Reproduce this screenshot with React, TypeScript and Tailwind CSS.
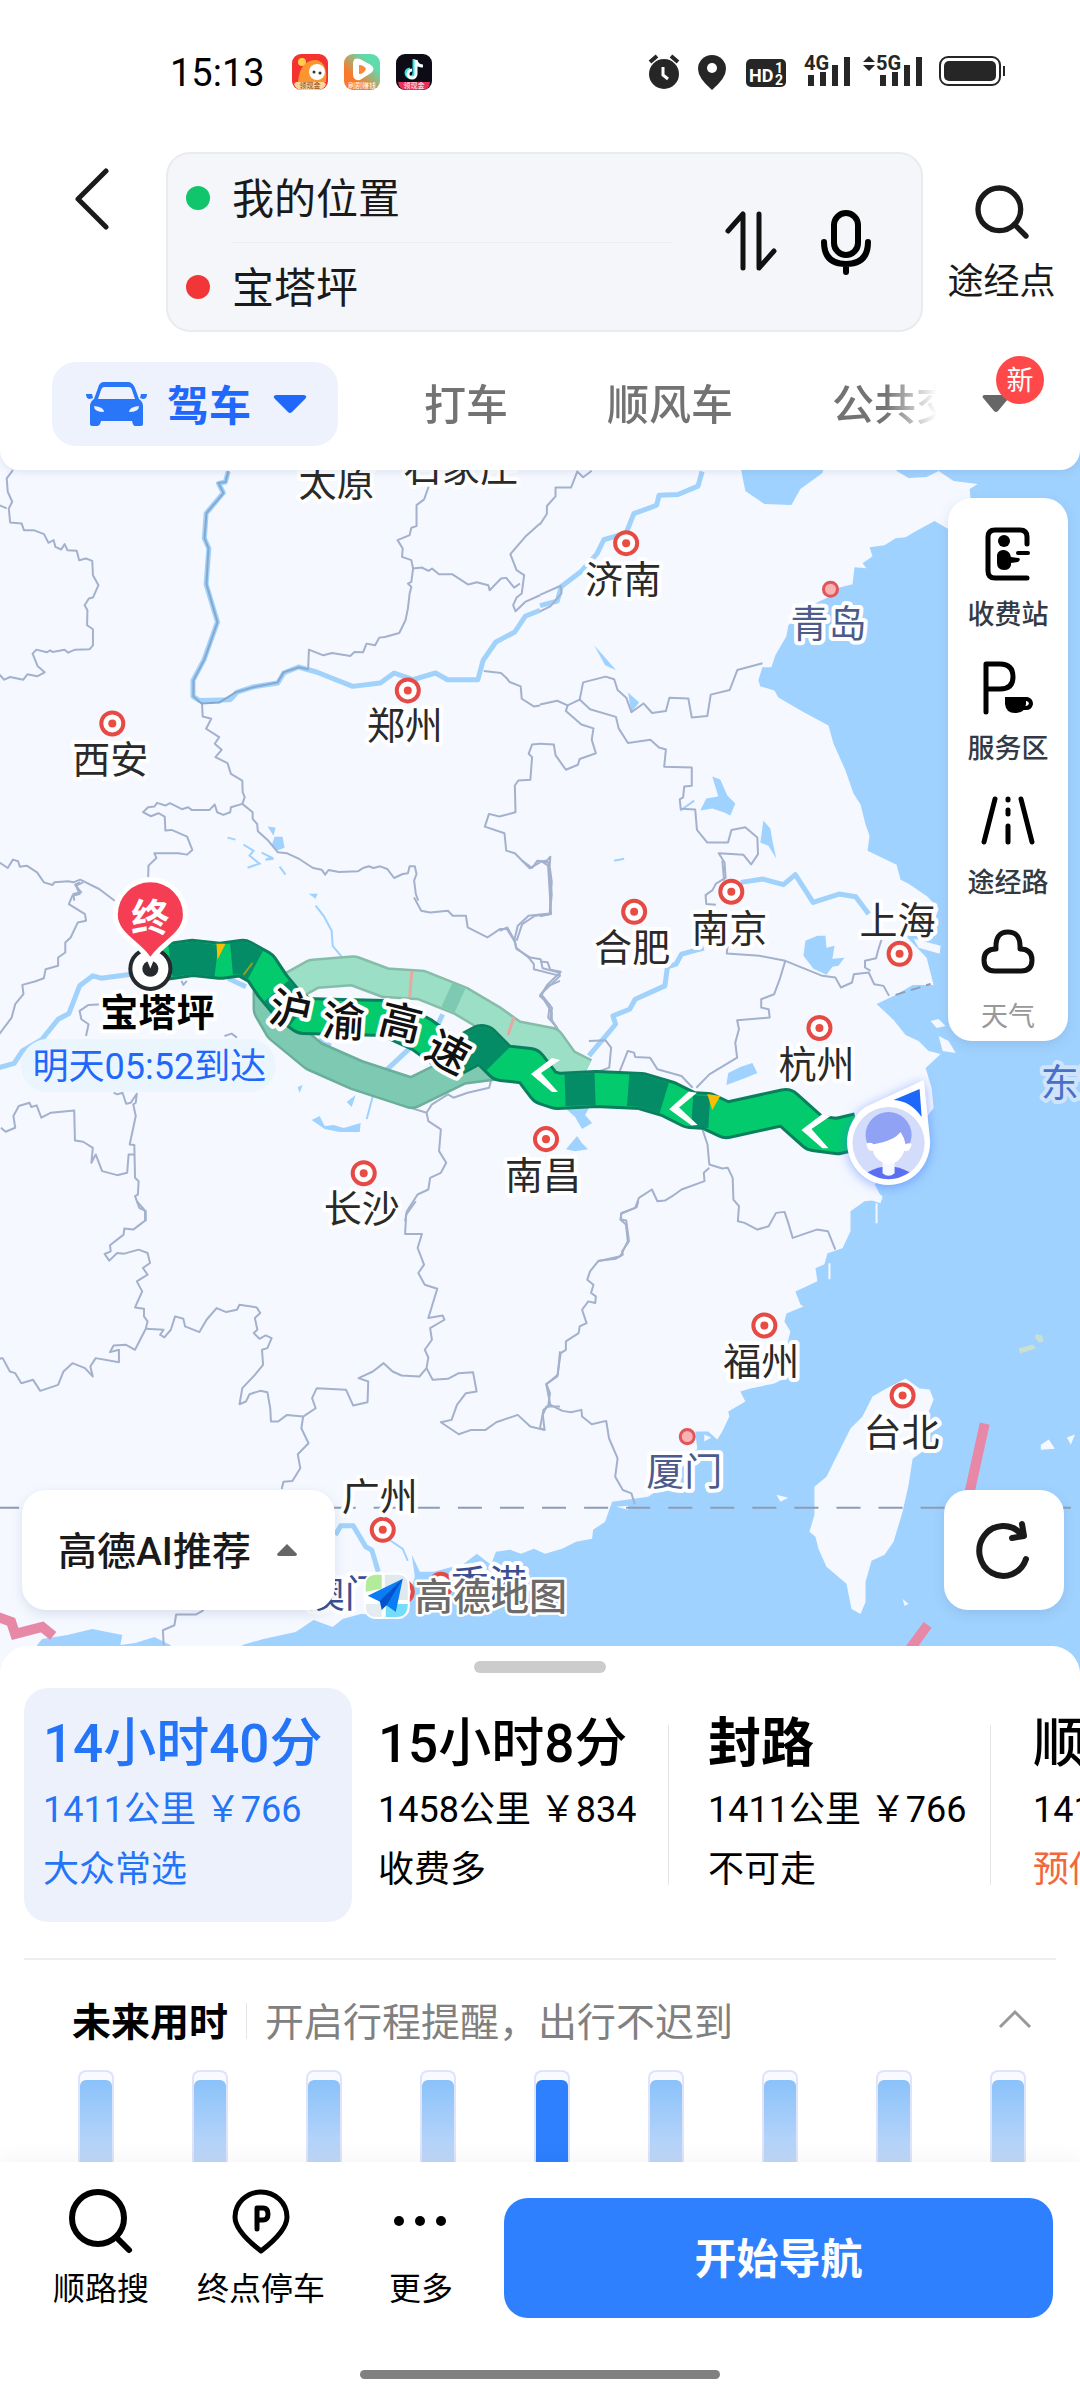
import { Search } from 'lucide-react';

const cities = [
  { name: '太原', x: 337, y: 481 },
  { name: '石家庄', x: 461, y: 466 },
  { name: '济南', x: 623, y: 578, dot: [626, 543] },
  { name: '郑州', x: 405, y: 724, dot: [408, 690] },
  { name: '西安', x: 111, y: 757, dot: [113, 723] },
  { name: '合肥', x: 632, y: 945, dot: [634, 911] },
  { name: '南京', x: 729, y: 926, dot: [731, 891] },
  { name: '上海', x: 897, y: 918, dot: [899, 953] },
  { name: '杭州', x: 816, y: 1062, dot: [819, 1027] },
  { name: '南昌', x: 543, y: 1173, dot: [546, 1138] },
  { name: '长沙', x: 362, y: 1206, dot: [364, 1172] },
  { name: '福州', x: 761, y: 1359, dot: [764, 1324] },
  { name: '台北', x: 901, y: 1429, dot: [902, 1394] },
  { name: '广州', x: 380, y: 1493, dot: [383, 1528] },
];

const coastCities = [
  { name: '青岛', x: 828, y: 622, dot: [830, 589] },
  { name: '厦门', x: 684, y: 1468, dot: [687, 1435] },
];

// Province borders and rivers, each tile in its own units
const tiles = [
  {
    transform: 'translate(0 460) scale(.3444 .3333)',
    borders: [
      '40,30 22,55 25,95 38,125 28,145 32,187 65,190 72,210 100,210 130,222 143,248 158,240 163,260 180,268 190,252 198,270 225,272 232,300 252,295 270,302 272,345 288,375 272,412 260,415 248,435 256,450 255,495 272,507 272,555 262,567 220,568 200,577 190,568 155,575 148,570 138,576 108,568 97,580 112,618 132,636 110,648 82,642 70,658 32,650 15,658 0,642',
      '0,135 22,145',
      '1245,80 1232,118 1210,135 1210,198 1195,203 1190,225 1155,240 1170,265 1168,290 1195,300 1200,325 1195,365 1185,370 1195,380 1190,400 1185,445 1178,480 1160,518 1118,530 1102,532 1090,555 1065,550 1055,576 1030,575 1018,587 965,578 940,585 898,568 896,625',
      '1200,325 1225,322 1245,332 1255,325 1275,342 1313,342 1360,373 1385,366 1418,375 1422,390 1455,355 1470,353 1493,382 1510,370',
      '1568,190 1525,230 1482,282 1500,330 1522,345 1515,400 1500,412 1490,435 1497,453 1525,425 1568,405',
      '588,725 590,768 615,775 600,805 638,830 625,850 645,868 627,890 662,908 672,940 705,960 706,995 712,1010 705,1030 735,1055 735,1075 748,1090 750,1112 780,1140 808,1175 835,1178 870,1195 910,1222 935,1227 945,1242 955,1228 985,1234 1040,1232 1055,1222 1072,1217 1085,1222 1105,1217 1125,1225 1145,1252 1170,1240 1185,1238 1190,1217 1205,1217 1210,1240 1203,1260 1208,1300 1215,1320',
      '705,1030 672,1040 670,1055 650,1063 632,1055 625,1032 610,1048 558,1048 548,1040 530,1046 495,1028 482,1035 458,1027 450,1038 432,1040 417,1055 440,1067 462,1058 480,1068 482,1110 500,1108 545,1128 560,1168 545,1182 520,1178 450,1178 456,1192 433,1215 432,1250',
      '0,1205 25,1222 40,1197 55,1202 60,1218 80,1215 110,1235 130,1265 155,1273 160,1265 200,1262 215,1265 235,1257 290,1285 335,1320',
      '235,1265 220,1272 238,1295 215,1300 218,1320',
      '1405,632 1455,638 1470,652 1480,665 1512,678 1515,715 1550,738 1568,735',
      '1568,850 1545,852 1535,880 1545,890 1540,958 1505,960 1495,975 1497,1055 1450,1068 1420,1060 1408,1098 1465,1118 1470,1170 1495,1178 1538,1223 1568,1205',
    ],
    rivers: [
      '664,34 656,66 636,70 650,98 600,160 595,235 608,265 600,372 633,485 594,598 562,660 562,708 580,720 670,718 690,695 735,680 808,668 825,638 868,620 920,635 1025,678 1105,668 1145,638 1200,658 1265,638 1300,658 1388,658 1403,600 1440,545 1495,515 1525,468 1568,450',
    ],
  },
  {
    transform: 'translate(540 460) scale(.3444 .3827)',
    borders: [
      '150,28 125,45 108,30 90,72 45,72 45,95 20,120 20,140 0,168',
      '0,352 60,328 62,348 30,382 0,395',
      '0,638 50,628 80,640 115,625 145,650 220,670 228,700 255,738 320,730 345,750 365,755 360,800 440,802 440,850 418,852 415,880 405,885 408,910 450,912 455,965 485,998 545,998 555,965 595,958 630,985 632,1028 612,1055 590,1030 518,1026 535,1050 538,1090 510,1105 500,1122 480,1135 482,1158 510,1160',
      '115,625 125,580 190,565 215,572 225,600 250,620 265,658 300,635 325,660 365,655 375,620 430,622 440,672 485,668 495,612 550,600 572,548 645,530',
      '80,640 75,655 120,690 155,700 150,730 162,765 115,780 110,795 75,808 45,770 40,742 0,740',
      '0,1048 20,1045 30,1035 28,1060 34,1100 28,1185 0,1190',
      '0,1308 22,1310 30,1330 60,1335 20,1370 5,1395 35,1430 30,1455 55,1490',
    ],
    rivers: [
      '470,30 458,68 400,90 345,92 338,118 272,140 250,190 215,200 185,208 165,245 120,290 62,330 50,368 0,380',
    ],
  },
  {
    transform: 'translate(0 860) scale(.3571 .3333)',
    borders: [
      '235,65 215,75 225,100 205,105 195,130 240,160 243,180 220,185 200,230 185,245 185,275 165,290 165,315 130,325 125,352 100,362 65,372 68,400 45,430 35,470 0,520',
      '290,430 250,432 225,450 230,475 250,490 243,525',
      '320,695 330,700 345,695 355,728 368,725 385,698 382,725 375,730 382,765 365,850 378,852 380,950 390,960 388,1000 380,1005 392,1040 410,1050 410,1080',
      '5,800 18,812 45,800 40,765 55,735 85,725 90,738 105,733 118,770 145,755 210,748 212,838 235,842 262,860 258,905 270,880 288,930 330,942 358,935 362,880 380,880',
      '1150,740 1195,755 1200,780 1235,805 1230,870 1250,905 1235,935 1205,950 1200,985 1170,1000 1140,1050 1135,1080',
      '1195,755 1210,730 1255,700 1270,710 1310,695 1370,680 1375,660',
      '1440,235 1445,260 1480,290 1495,310 1495,325 1568,345',
      '1160,110 1180,150 1205,155 1255,150 1268,165 1305,165 1310,200 1365,230 1400,205 1420,205 1440,240 1450,195 1480,165 1540,158 1545,100 1535,5 1505,0 1490,22 1462,0',
      '1568,360 1530,378 1512,405 1540,432 1535,470 1560,500',
      '630,525 650,518 665,530',
      '510,360 515,372 525,360',
    ],
    rivers: [
      '0,620 42,607 65,570 120,535 165,475 195,458 225,375 262,345 285,352 370,340',
      '640,352 690,378',
      '1240,460 1225,495 1150,560 1075,635',
    ],
  },
  {
    transform: 'translate(500 860) scale(.37 .3333)',
    borders: [
      '0,210 20,200 40,240 45,265 82,290 110,295 115,322 160,335 162,345 110,400 140,455 140,480 165,520 175,560',
      '110,0 130,15 138,160 95,165 60,190 45,240',
      '600,0 605,60',
      '615,250 612,278 700,285 770,300 870,345 905,350 920,380 950,365 955,340 995,335 1010,370 1035,375 1050,405',
      '770,300 755,355 740,400 705,415 705,440 725,445 728,470 640,478 645,505 635,545 640,590 565,640 530,680',
      '1030,235 1020,270 1015,292 985,300 985,320 1000,330',
      '240,540 285,538 300,560 295,620 265,632',
      '320,640 345,570 362,575 365,588 405,590 425,625 490,645 520,680',
      '545,800 560,850 565,910 600,922 615,920 628,950 630,1015 645,1035 642,1080 660,1085 695,1105 725,1095 745,1055 768,1052 778,1085 790,1130 855,1105 885,1110 905,1165',
      '565,920 550,935 552,960 490,985 465,1005 445,1018 425,1020 410,985 375,1010 365,1040 328,1055 325,1075 340,1090 345,1140 325,1185 265,1200',
    ],
    rivers: [
      '650,65 710,55 765,72 797,42 845,125 915,100 960,108 995,160',
      '550,262 490,280 475,310 452,318 445,375 365,415 350,445 305,465 312,490 240,585',
    ],
  },
  {
    transform: 'translate(0 1200) scale(.3571 .3333)',
    borders: [
      '385,0 408,28 408,58 375,85 350,82 348,100 310,132 312,150 295,158 308,178 330,155 350,157 390,145 415,155 422,185 402,200 415,220 385,240 400,270 380,318 405,322 405,345 415,360 410,382',
      '410,382 460,385 450,400 462,408 480,385 492,345 515,352 520,375 560,392 580,355 608,320 635,332 665,325 672,310 720,318 730,335 715,350 722,385 712,395 728,412 745,402 762,410 750,440 735,445 738,490 715,520 680,560 672,608 690,600 700,578 730,568 750,572 758,620 760,660 780,660 805,640 850,645 885,620 875,590 888,560 970,565 990,612 1030,602 1032,540 1005,530 1045,510 1075,485 1100,510 1125,522 1175,525 1195,500 1200,468 1190,445 1210,415 1205,380 1245,355 1240,342 1200,350 1225,262 1190,250 1172,215 1188,190 1170,140 1182,98 1135,98 1138,40 1165,0',
      '1195,500 1212,535 1255,532 1285,515 1325,512 1335,570 1305,575 1280,610 1265,655 1235,662 1285,698 1320,685 1360,685 1390,662 1450,640 1485,675 1525,685 1520,640 1530,615 1568,615',
      '1568,450 1562,520 1530,548 1540,575 1535,615',
      '850,645 845,680 865,725 835,758 842,800 820,838 795,840 790,862',
      '410,382 380,445 355,430 320,432 310,452 335,445 335,482 270,470 255,495 262,525 240,500 205,485 180,510 165,550 115,568 95,535 62,545 45,515 30,510 10,470 0,472',
      '572,1225 550,1238 495,1238 490,1270 458,1285 460,1330',
    ],
    rivers: ['940,1000 955,972 990,972 1025,1035 1042,1045 1060,1110'],
  },
  {
    transform: 'translate(540 1200) scale(.3444 .3333)',
    borders: [
      '285,0 280,18 235,38 235,55 250,58 258,120 238,150 240,160 220,172 170,178 145,210 137,235 155,250 148,275 162,285 160,305 140,300 122,325 135,365 115,375 112,395 75,420 75,445 60,455 50,525 18,548 30,610 10,625 0,680 15,685',
      '30,610 65,628 90,632 120,625 122,645 150,668 192,658 200,710 225,770 218,825 240,865 265,875 275,908',
    ],
    rivers: [],
  },
];

const sea =
  'M938,440 L938,471 953,481 977,484 969,489 970,500 985,520 948,529 934,521 915,531 905,537 895,538 884,545 869,547 872,556 862,563 866,568 854,567 852,584 836,588 830,596 817,602 802,613 788,625 786,636 779,648 775,655 771,667 762,667 758,680 760,686 774,690 778,697 802,711 828,725 833,743 845,770 853,793 860,804 865,824 869,835 867,850 896,864 900,879 908,883 927,896 938,908 930,930 905,935 926,957 933,984 912,984 895,994 876,1003 893,1019 905,1034 918,1040 928,1050 940,1053 925,1067 931,1087 933,1107 925,1117 907,1160 874,1183 882,1198 864,1200 850,1210 850,1230 842,1247 827,1252 824,1263 815,1267 817,1280 795,1290 800,1303 803,1305 786,1312 784,1320 790,1330 787,1342 798,1350 798,1370 774,1382 750,1387 740,1390 745,1400 728,1410 729,1415 722,1430 717,1438 708,1430 695,1430 697,1447 670,1480 648,1495 612,1500 605,1520 593,1528 592,1537 576,1540 562,1547 545,1552 534,1547 521,1552 510,1548 496,1550 491,1563 477,1552 464,1562 434,1570 420,1570 412,1553 415,1575 404,1613 361,1612 343,1617 333,1625 314,1618 296,1630 264,1637 243,1643 243,1690 1100,1690 1100,440 Z';

const lakes = [
  'M741,440 741,471 745,491 764,504 791,505 800,489 822,473 830,440 Z',
  'M892,440 896,471 908,478 926,477 938,471 940,440 Z',
  'M38,1690 38,1643 43,1637 68,1633 93,1627 123,1633 121,1643 136,1641 155,1635 171,1643 180,1690 Z',
  'M268,826 276,827 274,835 Z M275,836 283,836 285,847 277,850 272,845 Z',
  'M712,776 720,779 727,795 735,803 730,815 724,812 712,808 700,810 706,798 718,796 Z',
  'M763,820 770,828 772,840 776,858 768,845 760,842 Z M594,645 603,655 616,670 605,665 Z',
  'M628,692 639,702 631,712 Z M746,1000 752,1000 M817,935 805,940 803,955 813,968 826,974 832,966 838,965 844,957 832,958 834,945 826,947 825,935 Z',
  'M312,1119 320,1115 325,1125 334,1124 344,1127 361,1122 360,1131 340,1131 325,1128 Z',
  'M564,1106 589,1107 585,1114 592,1122 582,1128 575,1116 Z M577,1135 582,1142 588,1148 575,1150 566,1148 Z',
  'M728,1072 740,1066 752,1062 757,1072 745,1077 726,1084 Z M320,1036 332,1043 325,1058 318,1045 Z',
  'M347,1101 356,1094 352,1106 Z M309,893 318,893 316,898 Z M298,1086 303,1084 300,1092 Z',
];

const islands =
  'M905,1377 919,1387 929,1388 933,1398 927,1413 926,1447 912,1457 908,1483 902,1510 893,1540 884,1553 871,1559 865,1580 865,1600 860,1612 851,1607 846,1582 826,1565 818,1547 815,1535 809,1530 814,1513 814,1485 826,1475 850,1427 862,1415 872,1395 884,1388 Z M913,938 940,945 939,953 918,947 Z M930,1020 938,1018 945,1025 936,1027 Z M938,1035 948,1040 955,1052 942,1050 Z M870,1186 882,1195 880,1202 868,1198 Z M1040,1443 1048,1438 1054,1447 1040,1448 Z M1066,1436 1074,1433 1070,1443 Z M704,1433 711,1436 704,1440 Z M776,1493 788,1496 780,1500 Z M902,1597 908,1602 904,1604 Z M616,1505 628,1504 628,1508 Z';

const mainRoute =
  '165,961 193,957 221,960 243,957 261,967 273,985 288,1003 304,1015 343,1016 386,1017 421,1033 454,1057 482,1042 502,1062 529,1065 545,1086 557,1090 596,1088 641,1090 668,1098 690,1109 707,1110 726,1119 785,1106 814,1132 837,1135 858,1130';
const darkParts = [
  '171,960 193,957 217,960',
  '232,958 243,957 256,964',
  '277,990 288,1003 300,1012',
  '454,1057 482,1042 498,1058',
  '565,1089 595,1088',
  '628,1089 641,1090 664,1097',
  '692,1110 709,1111',
];
const northRoute =
  '280,992 314,973 354,970 386,982 421,984 461,1000 493,1019 514,1034 550,1041 565,1062 585,1072';
const southRoute =
  '276,978 269,992 269,1008 280,1027 314,1055 357,1074 412,1092 461,1068 500,1063';

const Marker = ({ x, y }) => (
  <g>
    <circle cx={x} cy={y} r="11" fill="#fff" stroke="#e54b44" strokeWidth="4" />
    <circle cx={x} cy={y} r="4" fill="#ea4c41" />
  </g>
);

const Arrow = ({ x, y, turn }) => (
  <path
    d="M7,-17 L15,-15 -4,-2 13,17 7,17 -14,-1 Z"
    transform={`translate(${x} ${y}) rotate(${turn})`}
    fill="#fff"
  />
);

const RouteMap = () => (
  <svg
    viewBox="0 446 1080 1226"
    preserveAspectRatio="xMidYMid slice"
    className="absolute inset-0 h-full w-full"
    role="img"
    aria-label="路线地图"
  >
    <rect x="-1000" y="0" width="4000" height="3000" fill="#f5f8ff" />
    <g fill="#a0d2ff">
      <path d={sea} />
      {lakes.map((d) => (
        <path key={d} d={d} />
      ))}
    </g>
    <path d={islands} fill="#f5f8ff" />
    <path d="M1035,1333 l6,1 2,6 -5,1 -4,-5 Z M1018,1347 l14,-4 3,4 -16,5 Z" fill="#cbdfcf" />
    <path d="M876,1202 v20 M829,1262 v16" stroke="#f5f8ff" strokeWidth="2" />
    <g fill="none" stroke="#a0d2ff" strokeWidth="2">
      <path d="M228,837 l8,2 M244,844 l10,6 -4,5 10,8 -12,4 M262,852 l10,5 -6,2 8,-1" />
      <path d="M316,905 l8,10 8,15 1,15 10,12" />
      <path d="M280,866 l6,8 M367,1118 l8,-30 M680,810 l14,-10 M388,1537 l15,10 5,12 M614,860 l10,-2" />
    </g>

    {tiles.map((tile) => (
      <g key={tile.transform} transform={tile.transform} fill="none" strokeLinejoin="round">
        {tile.rivers.map((points) => (
          <polyline key={points} points={points} stroke="#a0d2fb" strokeWidth="5" vectorEffect="non-scaling-stroke" />
        ))}
        {tile.borders.map((points) => (
          <polyline key={points} points={points} stroke="#a3b1cd" strokeWidth="2" vectorEffect="non-scaling-stroke" />
        ))}
      </g>
    ))}
    <polyline
      points="229,471 226,482 219,483 224,493 207,513 205,538 209,548 207,584 218,622 205,659 194,680 194,696 202,703 220,702 236,692 253,687 278,682 284,672 299,667 309,669"
      fill="none"
      stroke="#86a8cf"
      strokeWidth="2"
    />

    <g stroke="#8d9db5" strokeWidth="2">
      <line x1="-4" y1="1506" x2="1084" y2="1506" strokeDasharray="24 18" />
      <path d="M895,994 L930,983" strokeDasharray="10 6" />
    </g>
    <g fill="none" stroke="#e788a6" strokeWidth="10">
      <path d="M984,1422 L969,1490" />
      <path d="M927,1623 L900,1660" />
      <path d="M-4,1614 L12,1620 16,1632 43,1625 54,1634" />
    </g>

    <g fill="none" strokeLinejoin="round">
      <polyline points={southRoute} stroke="#6bae99" strokeWidth="32" />
      <polyline points={southRoute} stroke="#7dc9b1" strokeWidth="27" />
      <polyline points={northRoute} stroke="#86bda8" strokeWidth="31" />
      <polyline points={northRoute} stroke="#9be0c6" strokeWidth="26" />
      <path d="M447,994 L460,1000" stroke="#7dc9b1" strokeWidth="26" />
      <path d="M412,970 L410,996 M514,1016 L508,1034" stroke="#e5a9a0" strokeWidth="3" />
      <polyline points={mainRoute} stroke="#0a7f5d" strokeWidth="38" />
      <polyline points={mainRoute} stroke="#03cb6d" strokeWidth="32" />
      {darkParts.map((points) => (
        <polyline key={points} points={points} stroke="#048c67" strokeWidth="32" />
      ))}
    </g>
    <path d="M217,943 h9 l-8,16 Z M707,1093 l13,2 -8,14 Z" fill="#f9bd05" />
    <path d="M244,974 l9,-12" stroke="#8f9f20" strokeWidth="2" />
    <Arrow x={545} y={1074} turn={0} />
    <Arrow x={683} y={1108} turn={-5} />
    <Arrow x={815} y={1130} turn={0} />

    {cities.map(({ dot, name }) => dot && <Marker key={name} x={dot[0]} y={dot[1]} />)}
    {coastCities.map(({ dot, name }) => (
      <circle key={name} cx={dot[0]} cy={dot[1]} r="7" fill="#f9b3b3" stroke="#e0565a" strokeWidth="3" />
    ))}
    <Marker x={441} y={1583} />
    <Marker x={402} y={1590} />

    <g
      textAnchor="middle"
      dominantBaseline="central"
      fontSize="38"
      stroke="#fff"
      strokeWidth="8"
      strokeLinejoin="round"
      paintOrder="stroke"
    >
      <g fill="#2a2a2a">
        {cities.map((city) => (
          <text key={city.name} x={city.x} y={city.y + 2}>
            {city.name}
          </text>
        ))}
      </g>
      <g fill="#4c5b8c">
        {coastCities.map((city) => (
          <text key={city.name} x={city.x} y={city.y + 2}>
            {city.name}
          </text>
        ))}
        <text x="489" y="1582" fill="#3c4f90">香港</text>
        <text x="345" y="1592" fill="#3c4f90">澳门</text>
      </g>
      <text x="1040" y="1082" textAnchor="start" fill="#4a6fc9" stroke="#cfe4fa">东海</text>
      <g fill="#111" fontWeight="500" fontSize="42">
        <text transform="translate(291 1010) rotate(12)">沪</text>
        <text transform="translate(344 1021) rotate(4)">渝</text>
        <text transform="translate(401 1022) rotate(14)">高</text>
        <text transform="translate(448 1052) rotate(28)">速</text>
      </g>
      <text x="158" y="1012" fill="#000" fontWeight="700">宝塔坪</text>
    </g>

    {/* destination */}
    <rect x="22" y="1038" width="254" height="53" rx="26" fill="#eaf5fd" />
    <text x="150" y="1066" textAnchor="middle" dominantBaseline="central" fontSize="36" fill="#2267fb">
      明天05:52到达
    </text>
    <circle cx="151" cy="968" r="20" fill="#fff" stroke="#26292d" strokeWidth="4" />
    <circle cx="151" cy="968" r="8" fill="#26292d" />
    <path
      d="M151,961 C144,944 116,936 116,914 A35,35 0 1 1 186,914 C186,936 158,944 151,961 Z"
      fill="#f53d53"
      stroke="#fff"
      strokeWidth="5"
    />
    <text x="151" y="917" textAnchor="middle" dominantBaseline="central" fontSize="38" fontWeight="700" fill="#fff">
      终
    </text>

    {/* own position */}
    <g filter="drop-shadow(0 2px 6px rgb(60 110 255 / .5))">
      <path d="M922,1081 L928,1140 A40,41 0 1 1 866,1107 Z" fill="#fff" stroke="#fff" strokeWidth="3" strokeLinejoin="round" />
    </g>
    <path d="M893,1099 L919,1088 921,1116 Q910,1100 893,1099 Z" fill="#1d68fa" />
    <circle cx="888" cy="1142" r="36" fill="#d3ddfb" />
    <path d="M867,1171 q21,-12 42,0 q-21,14 -42,0 Z" fill="#5b6ff0" />
    <path d="M882,1158 h12 v14 q-6,5 -12,0 Z" fill="#f5f8ff" />
    <circle cx="888" cy="1134" r="23" fill="#8fa2f3" />
    <path d="M866,1142 Q871,1141 873,1143 Q893,1140 900,1131 Q904,1137 905,1143 Q909,1141 911,1143 Q910,1150 904,1150 Q898,1163 888,1163 Q876,1161 872,1150 Q866,1149 866,1142 Z" fill="#fff" />

    {/* watermark */}
    <g>
      <rect x="364" y="1571" width="46" height="46" rx="12" fill="#fff" />
      <path d="M366,1590 v-6 q0,-11 11,-11 h5 v14 Z" fill="#b2ec9b" />
      <path d="M385,1573 h13 q10,0 10,11 v14 h-23 Z" fill="#dfe9ee" />
      <path d="M386,1602 h22 q0,13 -11,13 h-11 Z" fill="#74defa" />
      <path d="M366,1602 h16 v13 h-5 q-11,0 -11,-11 Z" fill="#e3ecf1" />
      <path d="M368,1594 L403,1577 396,1610 385,1602 Z" fill="#0a7cf5" />
      <path d="M403,1577 L380,1599 382,1608 387,1603 Z" fill="#0553c9" />
      <text
        x="491"
        y="1595"
        textAnchor="middle"
        dominantBaseline="central"
        fontSize="38"
        fontWeight="500"
        fill="#6c6a6a"
        stroke="#fff"
        strokeWidth="5"
        strokeLinejoin="round"
        paintOrder="stroke"
      >
        高德地图
      </text>
    </g>
  </svg>
);

const StatusBar = () => (
  <div className="flex h-36 items-center justify-between pr-[74px] pl-[170px]">
    <div className="flex items-center gap-[27px]">
      <span className="pt-0.5 text-[38px] leading-none text-black">15:13</span>
      <div className="flex gap-4">
        <svg width="36" height="36" viewBox="0 0 36 36">
          <rect width="36" height="36" rx="9" fill="#f5322d" />
          <circle cx="10" cy="8" r="4" fill="#fcd04a" />
          <path d="M6,28 Q8,6 24,6 Q36,8 34,28 Z" fill="#fb9530" />
          <circle cx="25" cy="18" r="8" fill="#fff" />
          <circle cx="22" cy="18" r="1.5" fill="#333" />
          <circle cx="28" cy="19" r="1.5" fill="#333" />
          <path d="M4,28 h28 l2,2 q-2,6 -9,6 H11 q-7,0 -9,-6 Z" fill="#fbd59a" />
          <text x="18" y="34" textAnchor="middle" fontSize="7" fill="#8a3a10">领现金</text>
        </svg>
        <svg width="36" height="36" viewBox="0 0 36 36">
          <defs>
            <linearGradient id="video" x1="0" y1="1" x2="1" y2="0">
              <stop offset=".3" stopColor="#fa7a2c" />
              <stop offset=".75" stopColor="#5edcae" />
            </linearGradient>
          </defs>
          <rect width="36" height="36" rx="9" fill="url(#video)" />
          <path d="M9,10 Q9,3 16,5 L27,11 Q32,15 27,19 L16,26 Q9,27 9,20 Z" fill="#fff" />
          <path d="M15,11 Q20,11 22,15 Q20,20 15,20 Z" fill="#f98a3a" />
          <text x="18" y="34" textAnchor="middle" fontSize="7" fill="#fff">刷剧赚钱</text>
        </svg>
        <svg width="36" height="36" viewBox="0 0 36 36">
          <rect width="36" height="36" rx="9" fill="#0c0b16" />
          <g fill="none" strokeWidth="3">
            <path d="M18,5 V19 A4,4 0 1 1 14,15 M18,6 Q20,12 26,12" stroke="#25e5e0" />
            <path d="M20,6 V20 A4,4 0 1 1 16,16 M20,6 Q21,12 27,12" stroke="#fff" />
          </g>
          <path d="M2,28 h32 q0,8 -9,8 H11 q-8,0 -9,-8 Z" fill="#e8325c" />
          <text x="18" y="34" textAnchor="middle" fontSize="7" fill="#fff">领现金</text>
        </svg>
      </div>
    </div>

    <svg width="359" height="38" viewBox="0 0 359 38" fill="#262626">
      <circle cx="17" cy="21" r="15" />
      <path d="M3,9 L10,3 M31,9 L24,3" fill="none" stroke="#262626" strokeWidth="4" />
      <path d="M16,14 V22 L21,26" fill="none" stroke="#fff" strokeWidth="3" />
      <path d="M65,2 a14,14 0 0 1 14,14 Q79,25 65,37 Q51,25 51,16 A14,14 0 0 1 65,2 Z" />
      <circle cx="65" cy="15" r="5" fill="#fff" />
      <rect x="99" y="6" width="40" height="28" rx="5" />
      <g fill="#fff" fontWeight="700">
        <text x="102" y="29" fontSize="18">HD</text>
        <text x="128" y="20" fontSize="14">1</text>
        <text x="128" y="32" fontSize="14">2</text>
      </g>
      <text x="157" y="17" fontSize="20" fontWeight="700">4G</text>
      <path d="M161,22 h6 v11 h-6 Z M173,19 h6 v14 h-6 Z M185,12 h6 v21 h-6 Z M197,4 h6 v29 h-6 Z" />
      <path d="M216,9 l6,-6 6,6 Z M216,12 h12 l-6,6 Z" />
      <text x="229" y="17" fontSize="20" fontWeight="700">5G</text>
      <path d="M233,22 h6 v11 h-6 Z M245,19 h6 v14 h-6 Z M257,12 h6 v21 h-6 Z M269,4 h6 v29 h-6 Z" />
      <rect x="293" y="4" width="60" height="28" rx="8" fill="none" stroke="#262626" strokeWidth="2" />
      <rect x="297" y="8" width="52" height="20" rx="5" />
      <path d="M356,13 h2 v10 h-2 Z" />
    </svg>
  </div>
);

const tools = [
  {
    label: '收费站',
    icon: (
      <svg width="46" height="54" viewBox="0 0 46 54" fill="none" stroke="#000" strokeWidth="5" strokeLinecap="round" strokeLinejoin="round">
        <path d="M42,17 V10 Q42,3 35,3 H10 Q3,3 3,10 V44 Q3,51 10,51 H42" />
        <path d="M33,26 H43" strokeWidth="4" />
        <circle cx="19" cy="14" r="6" fill="#000" stroke="none" />
        <path d="M12,28 Q13,23 19,23 Q25,24 26,30 L34,31 Q36,33 33,35 L26,36 V38 Q25,43 19,43 Q12,43 12,36 Z" fill="#000" stroke="none" />
      </svg>
    ),
  },
  {
    label: '服务区',
    icon: (
      <svg width="52" height="54" viewBox="0 0 52 54" fill="none" stroke="#000" strokeWidth="5" strokeLinecap="round" strokeLinejoin="round">
        <path d="M4,51 V3 H18 Q31,3 31,16 Q31,28 18,28 H5" />
        <path d="M23,36 H44 V43 Q43,52 33,52 Q24,52 23,43 Z" fill="#000" stroke="none" />
        <path d="M42,38 h3 q4,1 4,5 q-1,4 -5,4 h-4" strokeWidth="4" />
      </svg>
    ),
  },
  {
    label: '途经路',
    icon: (
      <svg width="54" height="54" viewBox="0 0 54 54" fill="none" stroke="#000" strokeWidth="5" strokeLinecap="round">
        <path d="M14,4 L3,47 M40,4 L51,47 M27,4 V5 M27,15 V19 M27,31 V47" />
      </svg>
    ),
  },
  {
    label: '天气',
    muted: true,
    icon: (
      <svg width="54" height="54" viewBox="0 0 54 54" fill="none" stroke="#111" strokeWidth="5" strokeLinejoin="round">
        <path d="M15,20 Q14,3 27,3 Q40,3 39,20 Q51,20 51,31 Q51,42 40,42 H14 Q3,42 3,31 Q3,20 15,20 Z" />
      </svg>
    ),
  },
];

const routes = [
  { time: '15小时8分', detail: '1458公里 ￥834', note: '收费多', width: 'w-[291px]' },
  { time: '封路', detail: '1411公里 ￥766', note: '不可走', width: 'w-[322px] pl-[39px]', timeClass: 'font-bold' },
];

const RouteText = ({ time, detail, note, timeClass = 'font-medium', noteClass = '' }) => (
  <>
    <span className={`block text-[53px] leading-[64px] ${timeClass}`}>{time}</span>
    <span className="mt-2.5 block text-[36px] leading-[48px]">{detail}</span>
    <span className={`mt-3 block text-[36px] leading-[48px] ${noteClass}`}>{note}</span>
  </>
);

const bars = [0, 1, 2, 3, 4, 5, 6, 7, 8];

const App = () => {
  return (
    <div className="flex min-h-screen flex-col overflow-hidden bg-white font-[Roboto,'Noto_Sans_CJK_SC',sans-serif] text-[#1a1a1a]">
      <header className="relative z-10 rounded-b-[20px] bg-white pb-6 shadow-[0_2px_8px_rgba(60,80,120,0.12)]">
        <StatusBar />

        <div className="grid grid-cols-[166px_1fr_157px] pt-2">
          <button aria-label="返回" className="flex h-[94px] items-center pl-[74px]">
            <svg width="36" height="62" viewBox="0 0 36 62" fill="none" stroke="#1a1a1a" strokeWidth="5" strokeLinecap="round" strokeLinejoin="round">
              <path d="M32,3 L4,31 32,59" />
            </svg>
          </button>

          <div className="flex h-[180px] items-center rounded-3xl border-2 border-[#e9ebef] bg-[#f4f6fa] pl-[18px]">
            <div className="min-w-0 flex-1">
              <label className="flex h-[88px] items-center gap-[22px]">
                <span className="h-6 w-6 shrink-0 rounded-full bg-[#10c56c]" />
                <input aria-label="起点" defaultValue="我的位置" className="w-full min-w-0 bg-transparent pt-1 text-[42px] leading-[60px] outline-none" />
              </label>
              <div className="ml-[46px] h-px bg-[#eceef2]" />
              <label className="flex h-[88px] items-center gap-[22px]">
                <span className="h-6 w-6 shrink-0 rounded-full bg-[#f23637]" />
                <input aria-label="终点" defaultValue="宝塔坪" className="w-full min-w-0 bg-transparent pt-1 text-[42px] leading-[60px] outline-none" />
              </label>
            </div>
            <button aria-label="交换起终点" className="ml-[50px]">
              <svg width="54" height="64" viewBox="0 0 54 64" fill="none" stroke="#111" strokeWidth="5" strokeLinecap="round" strokeLinejoin="round">
                <path d="M5,21 L20,4 V58 M36,4 V58 L51,41" />
              </svg>
            </button>
            <button aria-label="语音输入" className="mr-[48px] ml-[42px]">
              <svg width="54" height="66" viewBox="0 0 54 66" fill="none" stroke="#000" strokeWidth="6" strokeLinecap="round">
                <rect x="15" y="4" width="24" height="42" rx="12" />
                <path d="M5,33 Q5,55 27,55 Q49,55 49,33 M27,56 V63" />
              </svg>
            </button>
          </div>

          <button className="flex flex-col items-center pt-7">
            <Search size={64} strokeWidth={2} />
            <span className="mt-3.5 text-[36px] leading-[48px]">途经点</span>
          </button>
        </div>

        <div className="mt-[30px] flex items-center pl-[52px]">
          <button className="flex h-[84px] w-[286px] shrink-0 items-center rounded-3xl bg-[#edf2fc] pl-[34px] text-[42px] font-bold text-[#1f68fb]">
            <svg width="61" height="44" viewBox="0 0 61 44" fill="#2a76f8">
              <path
                fillRule="evenodd"
                d="M17,0 H43 Q47,1 49,6 L53,17 Q57,20 57,24 V42 Q57,44 54,44 H49 Q47,44 46,39 H15 Q14,44 11,44 H6 Q4,44 4,42 V24 Q4,20 8,17 L12,6 Q13,1 17,0 Z M18,5 Q16,5 15,8 L12,17 H49 L46,8 Q45,5 43,5 Z M8,24 Q8,30 18,30 Q18,25 8,24 Z M53,24 Q53,30 43,30 Q43,25 53,24 Z"
              />
              <path d="M0,12 h6 l1,4 -3,1 q-4,0 -4,-5 Z M61,12 h-6 l-1,4 3,1 q4,0 4,-5 Z" />
            </svg>
            <span className="ml-5 pt-1">驾车</span>
            <svg width="34" height="20" viewBox="0 0 34 20" className="ml-[22px]" fill="#1f68fb">
              <path d="M3,1 H31 Q35,2 32,5 L19,18 Q17,20 15,18 L2,5 Q-1,2 3,1 Z" />
            </svg>
          </button>
          <nav className="ml-[86px] flex min-w-0 flex-1 gap-[99px] overflow-hidden [mask-image:linear-gradient(to_right,black_90%,transparent)] pt-1 text-[42px] leading-[60px] font-medium whitespace-nowrap text-[#737373]">
            <button className="shrink-0">打车</button>
            <button className="shrink-0">顺风车</button>
            <button className="shrink-0">公共交通</button>
          </nav>
          <button aria-label="更多出行方式" className="relative h-[84px] w-[143px] shrink-0 pl-[45px]">
            <svg width="28" height="18" viewBox="0 0 28 18" fill="#666">
              <path d="M2,0 H26 Q29,1 26,4 L16,16 Q14,18 12,16 L2,4 Q-1,1 2,0 Z" />
            </svg>
            <span className="absolute -top-[6px] right-9 flex h-12 w-12 items-center justify-center rounded-full bg-[#ff4849] pt-0.5 text-[27px] text-white">
              新
            </span>
          </button>
        </div>
      </header>

      <main className="relative -mt-6 -mb-7 flex min-h-[1200px] flex-1 flex-col justify-between overflow-hidden">
        <RouteMap />

        <aside className="relative mt-[52px] mr-3 flex w-[120px] flex-col self-end rounded-3xl bg-white pt-[29px] pb-[6px] shadow-[0_4px_12px_rgba(60,90,140,0.15)]">
          {tools.map((tool) => (
            <button
              key={tool.label}
              className="flex h-[134px] flex-col items-center text-[27px] leading-9 font-medium last:h-auto"
            >
              {tool.icon}
              <span className={tool.muted ? 'mt-4 font-normal text-[#999]' : 'mt-4 text-[#333a45]'}>{tool.label}</span>
            </button>
          ))}
        </aside>

        <div className="relative mr-4 mb-16 ml-[22px] flex justify-between">
          <button className="flex h-[120px] items-center gap-[26px] rounded-3xl bg-white pr-[38px] pl-9 text-[39px] font-medium shadow-[0_4px_12px_rgba(60,90,140,0.15)]">
            <span className="pt-1">高德AI推荐</span>
            <svg width="20" height="12" viewBox="0 0 20 12" fill="#666">
              <path d="M10,0 L20,10 Q20,12 18,12 H2 Q0,12 0,10 Z" />
            </svg>
          </button>
          <button aria-label="刷新" className="flex h-[120px] w-[120px] items-center justify-center rounded-3xl bg-white shadow-[0_4px_12px_rgba(60,90,140,0.15)]">
            <svg width="60" height="60" viewBox="0 0 60 60" fill="none" stroke="#1a1a1a" strokeWidth="6" strokeLinecap="round" strokeLinejoin="round">
              <path d="M52,39 A24,25 0 1 1 47,14" />
              <path d="M48,4 L50,16 38,18" />
            </svg>
          </button>
        </div>
      </main>

      <section className="relative rounded-t-[28px] bg-white pt-[15px]">
        <div className="mx-auto h-3 w-[132px] rounded-full bg-[#ccc]" />

        <div className="mt-[15px] ml-6 flex overflow-hidden text-left whitespace-nowrap">
          <button className="mr-[26px] h-[234px] w-[328px] shrink-0 rounded-3xl bg-[#ecf1fc] pb-1 pl-[19px] text-left text-[#2474f8]">
            <RouteText time="14小时40分" detail="1411公里 ￥766" note="大众常选" />
          </button>
          {routes.map((route) => (
            <div key={route.time} className="relative shrink-0">
              <button className={`h-[234px] pb-1 text-left text-black ${route.width}`}>
                <RouteText time={route.time} detail={route.detail} note={route.note} timeClass={route.timeClass} />
              </button>
              <span className="absolute top-[37px] right-0 h-[160px] w-px bg-[#e5e5e5]" />
            </div>
          ))}
          <button className="h-[234px] pb-1 pl-[42px] text-left text-black">
            <RouteText time="顺路" detail="1411公里 ￥766" note="预估拥堵" noteClass="text-[#f2683c]" />
          </button>
        </div>

        <hr className="mx-6 mt-9 border-t-2 border-[#eee]" />

        <div className="mt-[31px] flex h-[60px] items-center pr-12 pl-[72px] text-[39px]">
          <h2 className="pt-1 font-bold text-black">未来用时</h2>
          <span className="mx-[18px] h-9 w-px bg-[#e5e5e5]" />
          <p className="pt-1 text-[#808080]">开启行程提醒，出行不迟到</p>
          <button aria-label="收起" className="ml-auto pb-1">
            <svg width="34" height="20" viewBox="0 0 34 20" fill="none" stroke="#999" strokeWidth="3">
              <path d="M2,18 L17,3 32,18" />
            </svg>
          </button>
        </div>

        <div className="mt-[19px] flex h-[92px] justify-between overflow-hidden pr-[54px] pl-[78px]">
          {bars.map((bar) => (
            <div key={bar} className="h-full w-9 rounded-t-lg border-2 border-b-0 border-[#dfe4fb] bg-[#f8faff] pt-2">
              <div
                className={
                  bar === 4
                    ? 'h-full rounded-t-md bg-[#2e80ff]'
                    : 'h-full rounded-t-md bg-linear-to-b from-[#8ac2fa] to-[#c1d8f8]'
                }
              />
            </div>
          ))}
        </div>
      </section>

      <footer className="relative bg-white pb-[21px] shadow-[0_-8px_16px_rgba(0,0,0,0.03)]">
        <div className="flex items-start pt-[27px] pr-[27px] pl-[21px] text-[32px] leading-10 text-black">
          <button className="flex w-40 flex-col items-center">
            <svg width="66" height="66" viewBox="0 0 66 66" fill="none" stroke="#000" strokeWidth="6" strokeLinecap="round">
              <circle cx="30" cy="29" r="26" />
              <path d="M51,51 L61,61" />
            </svg>
            <span className="mt-3.5">顺路搜</span>
          </button>
          <button className="flex w-40 flex-col items-center">
            <svg width="66" height="66" viewBox="0 0 66 66" fill="none" stroke="#000" strokeWidth="5" strokeLinecap="round" strokeLinejoin="round">
              <path d="M33,62 Q7,42 7,28 A26,25 0 0 1 59,28 Q59,42 33,62 Z" />
              <path d="M29,40 V19 H35 Q40,19 40,25 Q40,31 35,31 H29" strokeWidth="5" />
            </svg>
            <span className="mt-3.5">终点停车</span>
          </button>
          <button className="flex w-40 flex-col items-center">
            <svg width="66" height="66" viewBox="0 0 66 66">
              <circle cx="11" cy="32" r="5" />
              <circle cx="32" cy="32" r="5" />
              <circle cx="53" cy="32" r="5" />
            </svg>
            <span className="mt-3.5">更多</span>
          </button>
          <button className="mt-[9px] ml-[3px] h-[120px] flex-1 rounded-3xl bg-[#2e80ff] pt-1 text-[42px] font-bold text-white">
            开始导航
          </button>
        </div>
        <div className="mx-auto mt-[52px] h-[9px] w-[360px] rounded-full bg-[#808080]" />
      </footer>
    </div>
  );
};

export default App;
